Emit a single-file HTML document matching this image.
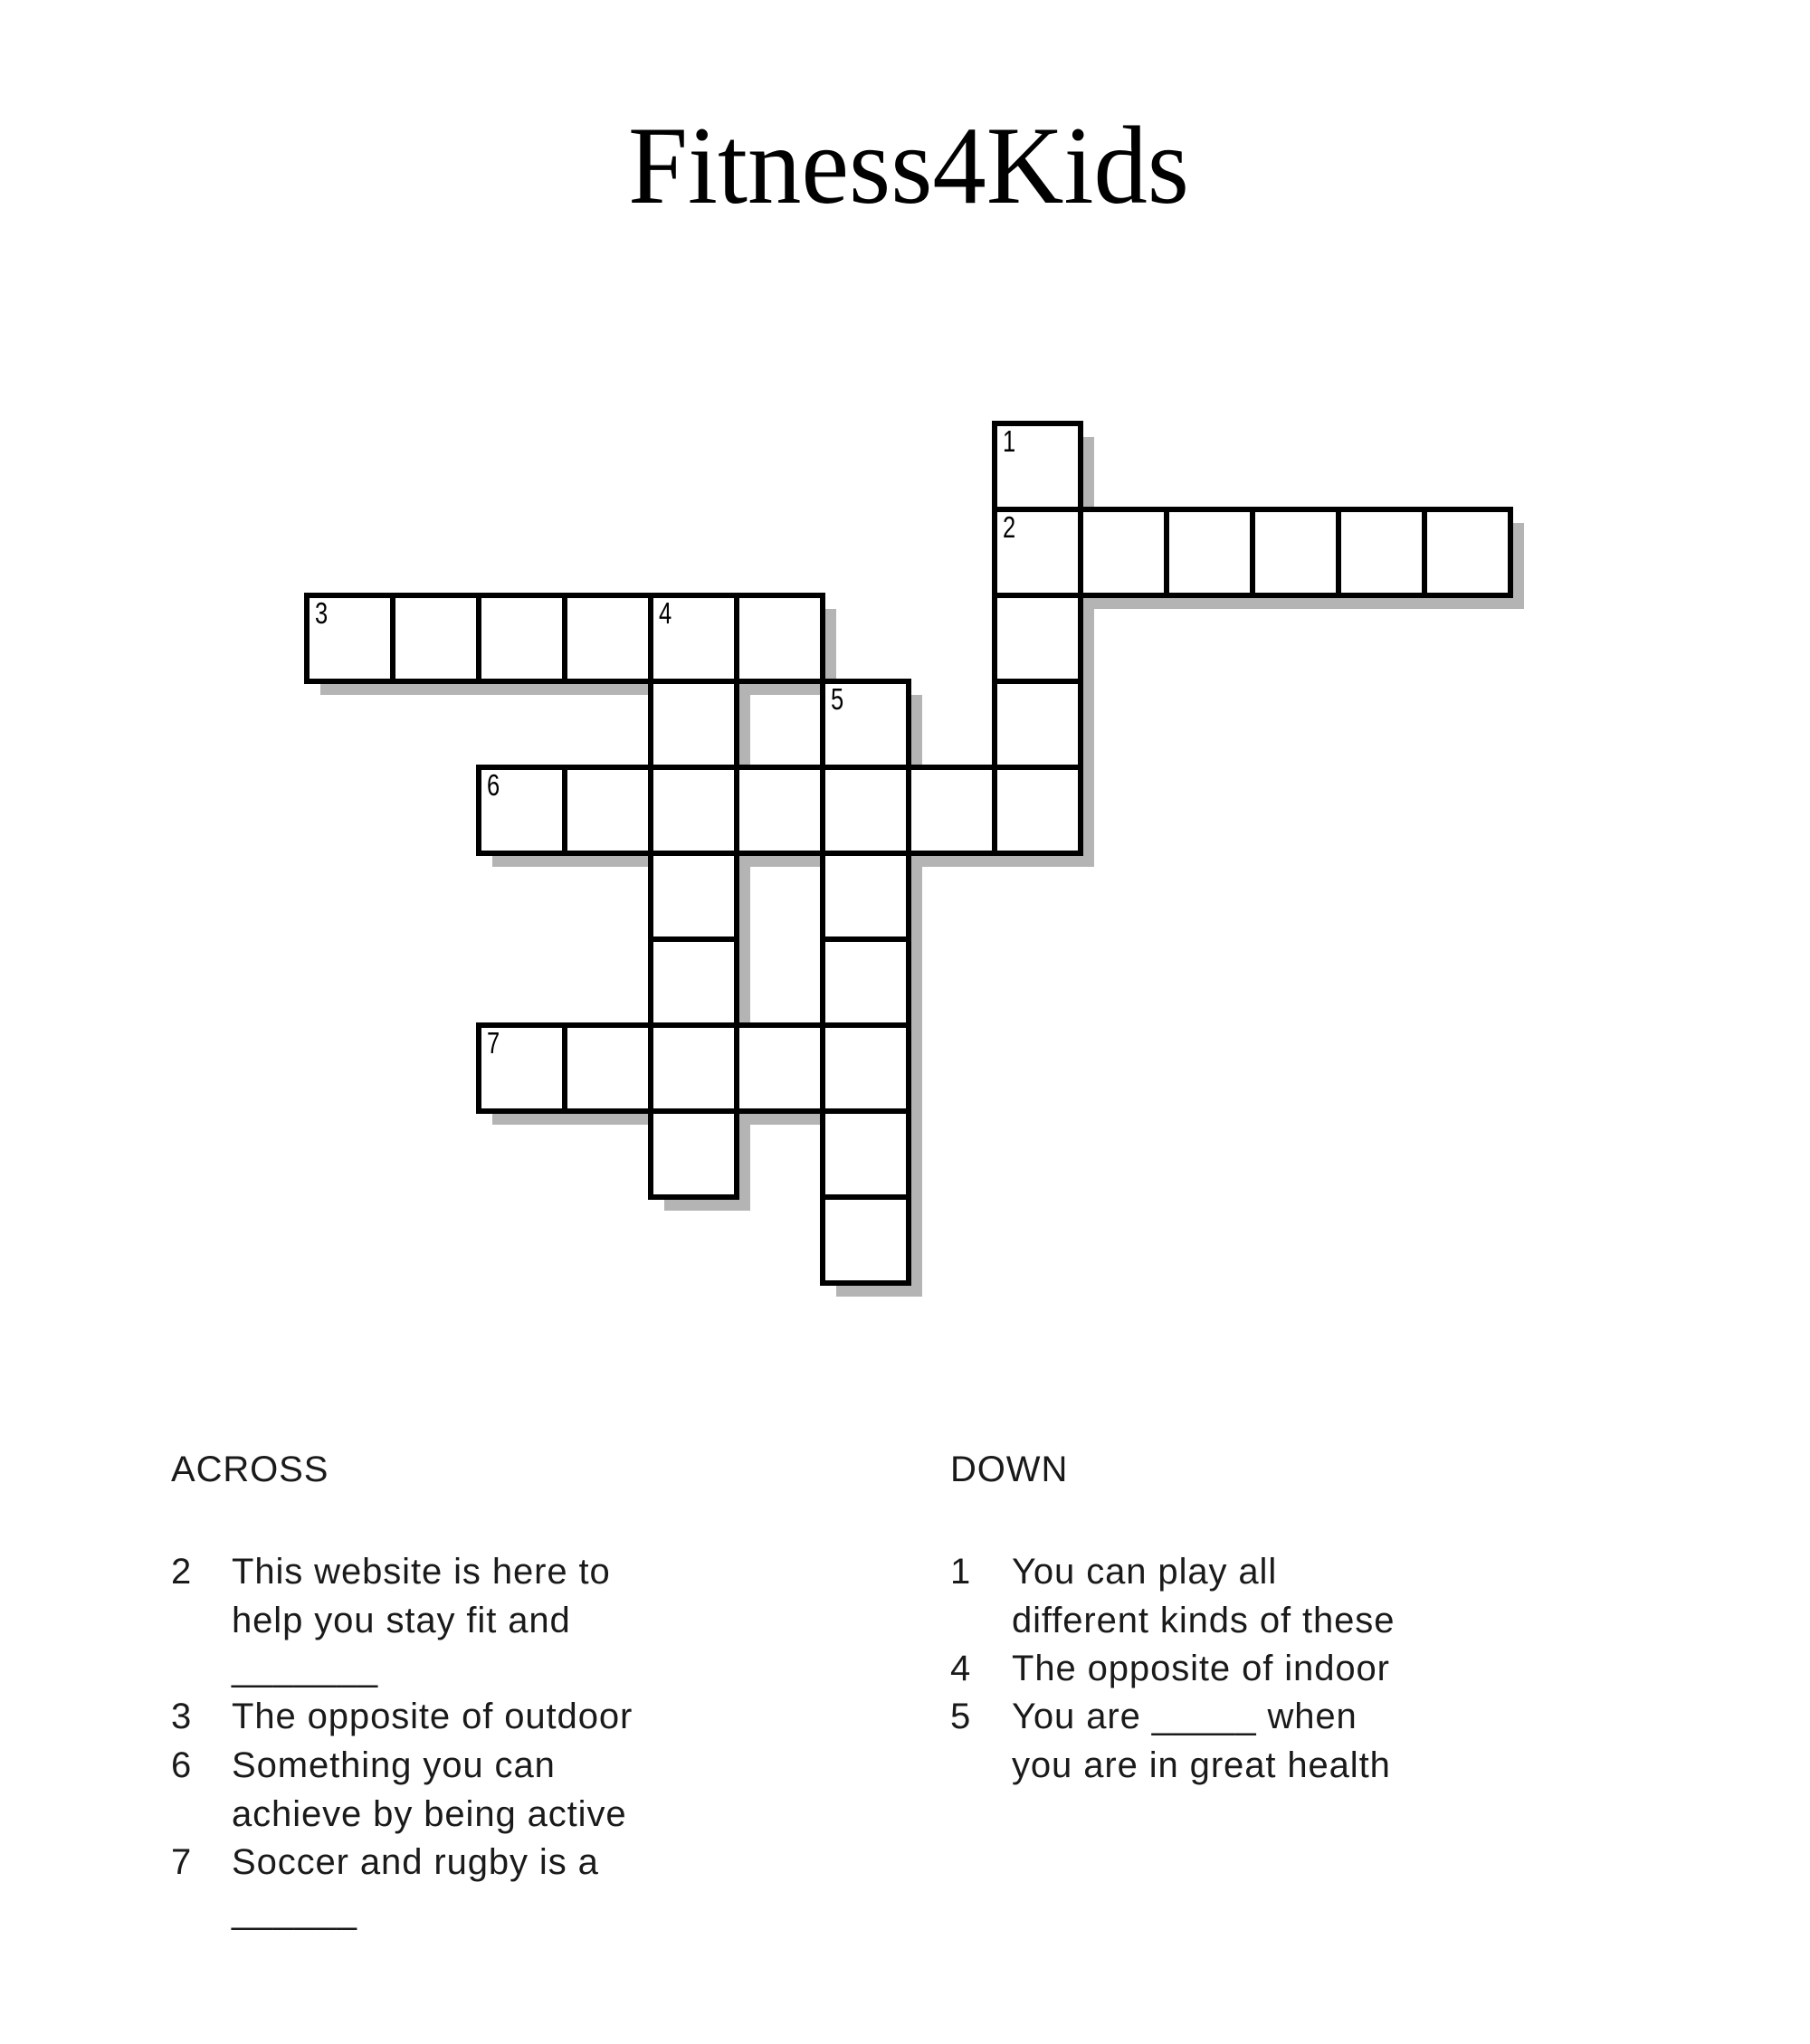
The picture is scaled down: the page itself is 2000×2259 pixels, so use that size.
<!DOCTYPE html>
<html><head><meta charset="utf-8"><style>
html,body{margin:0;padding:0;background:#fff;}
body{width:2000px;height:2259px;position:relative;overflow:hidden;}
.t{position:absolute;font-family:"Liberation Sans",sans-serif;font-size:40px;letter-spacing:0.9px;color:#1a1a1a;line-height:53.5px;white-space:nowrap;}
</style></head><body>
<svg width="2000" height="2259" style="position:absolute;left:0;top:0" xmlns="http://www.w3.org/2000/svg">
<text x="694" y="224" font-family="Liberation Serif, serif" font-size="123" textLength="620" lengthAdjust="spacingAndGlyphs" fill="#000">Fitness4Kids</text>
<g id="g"></g>
</svg>
<div class="t" style="left:189px;top:1598px;">ACROSS</div>
<div class="t" style="left:1050px;top:1598px;">DOWN</div>

<div class="t" style="left:189px;top:1711px;">2</div>
<div class="t" style="left:256px;top:1711px;">This website is here to<br>help you stay fit and<br>_______</div>
<div class="t" style="left:189px;top:1871px;">3</div>
<div class="t" style="left:256px;top:1871px;">The opposite of outdoor</div>
<div class="t" style="left:189px;top:1925px;">6</div>
<div class="t" style="left:256px;top:1925px;">Something you can<br>achieve by being active</div>
<div class="t" style="left:189px;top:2032px;">7</div>
<div class="t" style="left:256px;top:2032px;">Soccer and rugby is a<br>______</div>

<div class="t" style="left:1050px;top:1711px;">1</div>
<div class="t" style="left:1118px;top:1711px;">You can play all<br>different kinds of these</div>
<div class="t" style="left:1050px;top:1818px;">4</div>
<div class="t" style="left:1118px;top:1818px;">The opposite of indoor</div>
<div class="t" style="left:1050px;top:1871px;">5</div>
<div class="t" style="left:1118px;top:1871px;">You are _____ when<br>you are in great health</div>

<script>
var cells=[];
function add(r,c){for(var i=0;i<cells.length;i++)if(cells[i][0]==r&&cells[i][1]==c)return;cells.push([r,c]);}
for(var r=0;r<=4;r++)add(r,8);
for(var c=8;c<=13;c++)add(1,c);
for(var c=0;c<=5;c++)add(2,c);
for(var r=2;r<=8;r++)add(r,4);
for(var r=3;r<=9;r++)add(r,6);
for(var c=2;c<=8;c++)add(4,c);
for(var c=2;c<=6;c++)add(7,c);
var X0=339,Y0=468,S=95,ns="http://www.w3.org/2000/svg",g=document.getElementById('g');
function rect(x,y,f,s){var e=document.createElementNS(ns,'rect');e.setAttribute('x',x);e.setAttribute('y',y);e.setAttribute('width',S);e.setAttribute('height',S);e.setAttribute('fill',f);if(s){e.setAttribute('stroke','#000');e.setAttribute('stroke-width',6);}g.appendChild(e);}
cells.forEach(function(p){rect(X0+p[1]*S+15,Y0+p[0]*S+15,'#b4b4b4');});
cells.forEach(function(p){rect(X0+p[1]*S,Y0+p[0]*S,'#fff');});
cells.forEach(function(p){rect(X0+p[1]*S,Y0+p[0]*S,'none',1);});
var nums=[[0,8,'1'],[1,8,'2'],[2,0,'3'],[2,4,'4'],[3,6,'5'],[4,2,'6'],[7,2,'7']];
nums.forEach(function(n){var t=document.createElementNS(ns,'text');var x=X0+n[1]*S+9,y=Y0+n[0]*S+31;t.setAttribute('transform','translate('+x+','+y+') scale(0.85,1.1)');t.setAttribute('font-family','Liberation Sans, sans-serif');t.setAttribute('font-size','30');t.textContent=n[2];g.appendChild(t);});
</script>
</body></html>
